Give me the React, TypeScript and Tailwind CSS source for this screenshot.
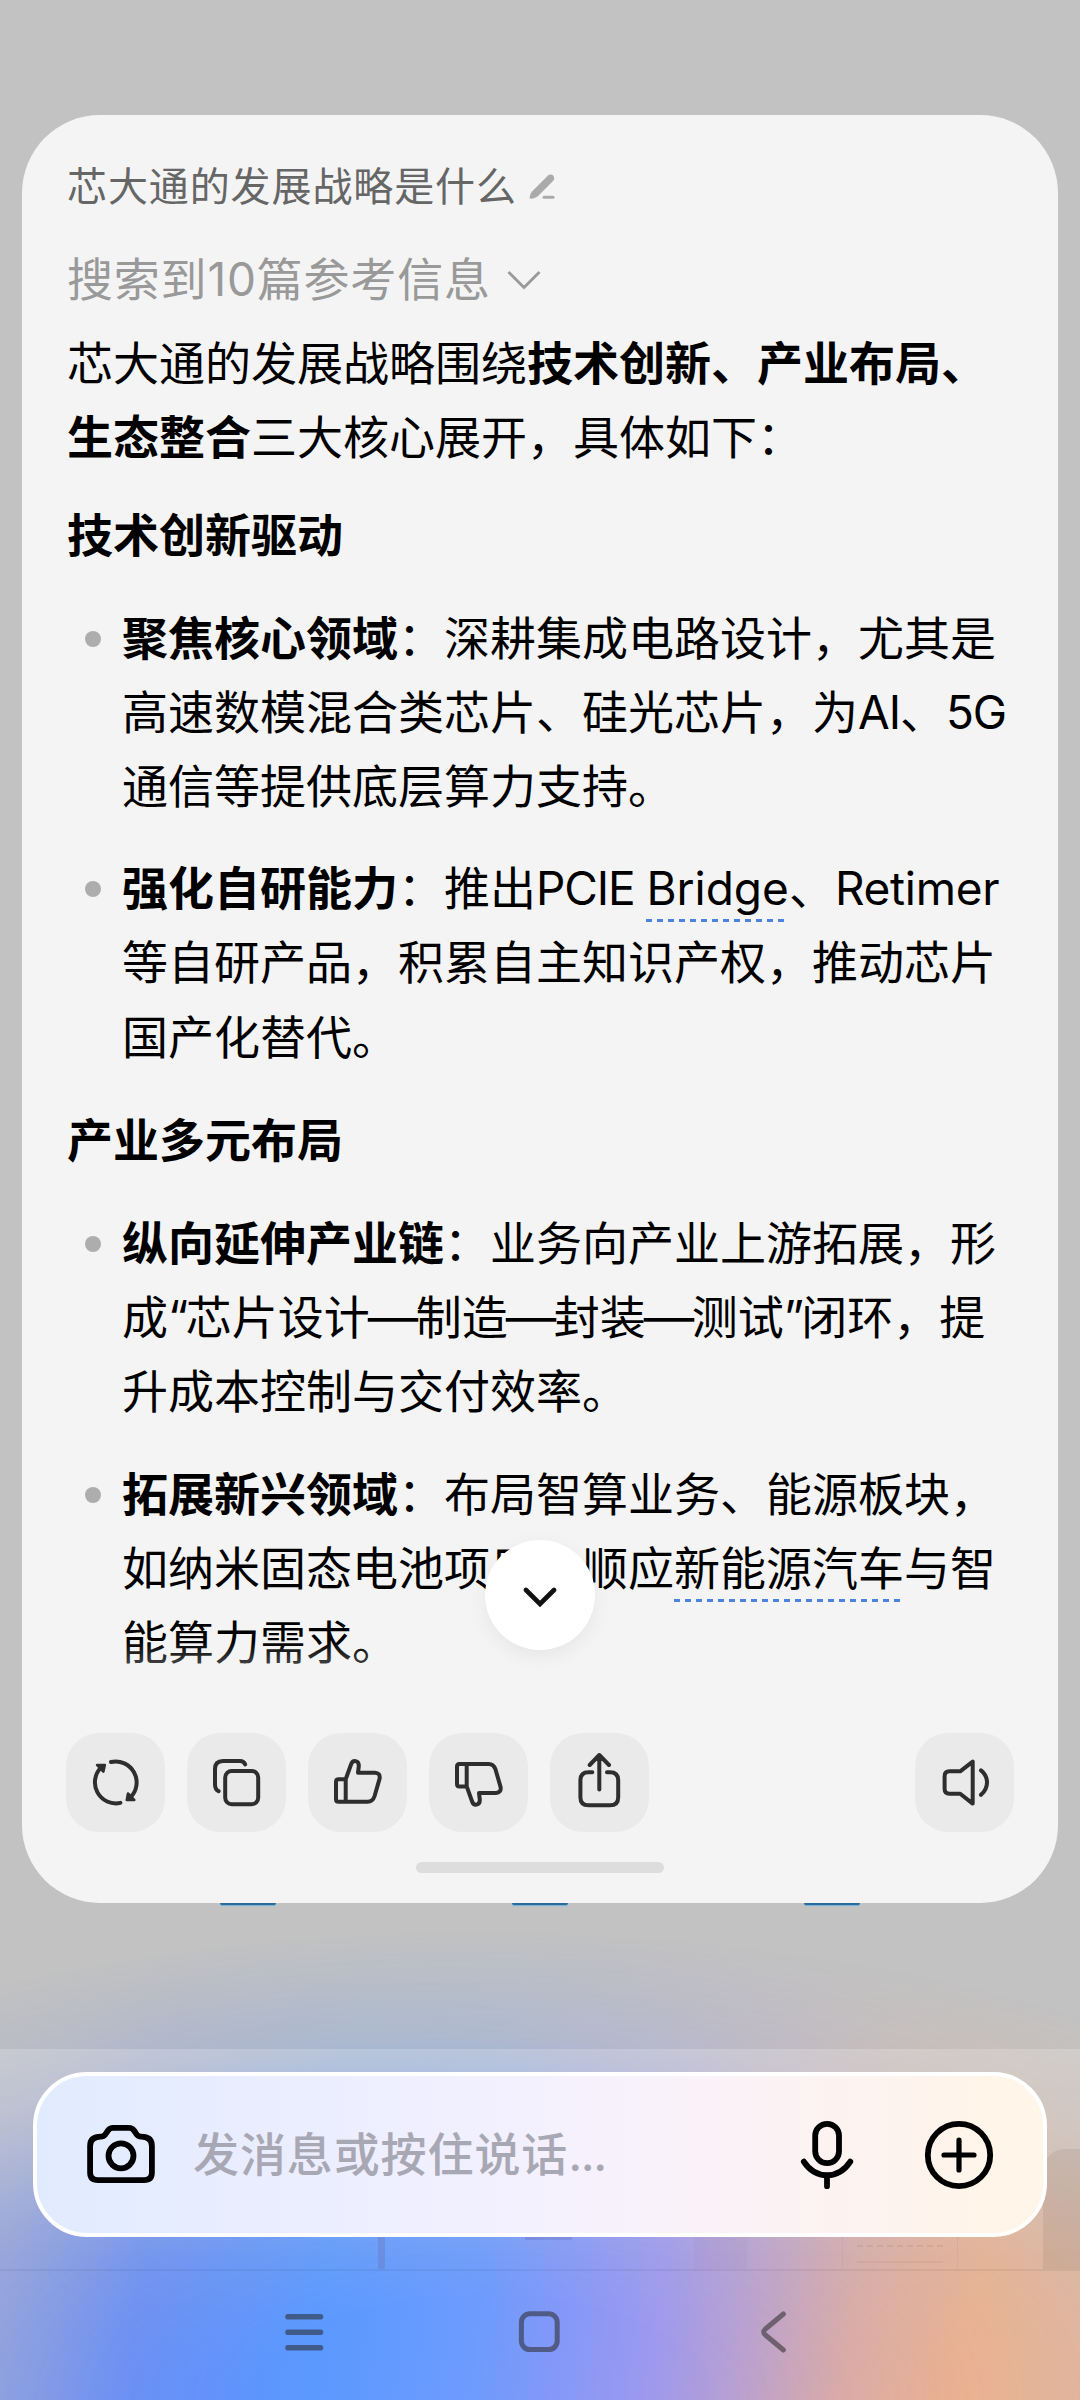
import type { ReactNode } from 'react'

const actions = ['refresh', 'copy', 'like', 'dislike', 'share'] as const

type IconName = (typeof actions)[number] | 'speaker'

const thumb =
  'M37.7 46.3H30.5Q28 46.3 28 48.8V66.2Q28 68.7 30.5 68.7H59.5Q64.8 68.7 66.6 63L71.6 45.6Q72.4 40 67 39.8H50L50.8 33C51 27 44.8 26.6 43.2 31L37.7 46.3V68.7'

const iconShapes: Record<IconName, ReactNode> = {
  refresh: (
    <>
      <path d="M45 29A21 21 0 0 1 64.2 64.6M54.4 69.9A21 21 0 0 1 35.2 34.4" />
      <path d="M62 60.5L68.2 67H60.8ZM31.2 32L38.8 32L37.4 38.6Z" fill="currentColor" strokeWidth="2.6" />
    </>
  ),
  copy: (
    <>
      <rect x="38.2" y="38" width="33" height="33.2" rx="6.5" />
      <path d="M58.2 31.4Q56.8 28 53 28H36Q28 28 28 36V51.5Q28 56.6 31.6 58.2" />
    </>
  ),
  like: <path d={thumb} />,
  dislike: <path d={thumb} transform="translate(0 99.7) scale(1 -1)" />,
  share: (
    <path d="M49.3 56.5V22M39.7 32L49.3 22L59 32M42.3 39.3H38.5Q30.4 39.3 30.4 47.4V64.2Q30.4 72.3 38.5 72.3H60Q68.2 72.3 68.2 64.2V47.4Q68.2 39.3 60 39.3H57" />
  ),
  speaker: (
    <path d="M57.7 28.6V70.6L45.2 60.7H34.5Q29.6 60.7 29.6 55.8V43.2Q29.6 38.3 34.5 38.3H45.2ZM66 37.4Q72 42.4 72 49.4T66 61.8" />
  ),
}

function ActionButton({ name }: { name: IconName }) {
  return (
    <button className="h-[99px] w-[99px] rounded-[33px] bg-black/[0.04] text-[#2e2e2e]">
      <svg
        viewBox="0 0 99 99"
        className="h-full w-full"
        fill="none"
        stroke="currentColor"
        strokeWidth="4"
        strokeLinecap="round"
        strokeLinejoin="round"
      >
        {iconShapes[name]}
      </svg>
    </button>
  )
}

function Term({ children }: { children: ReactNode }) {
  return (
    <span className="inline-block bg-[repeating-linear-gradient(90deg,#4c83dc_0_6px,transparent_6px_11px)] bg-[length:100%_3px] bg-[position:0_68px] bg-no-repeat align-top">
      {children}
    </span>
  )
}

const Dash = () => <span className="inline-block h-[74px] w-[46px] scale-x-110 text-center align-top">—</span>

const Latin = ({ children }: { children: ReactNode }) => <span className="tracking-[-1.1px]">{children}</span>

const Quote = ({ children }: { children: ReactNode }) => <span className="tracking-[-2.6px]">{children}</span>

function Item({ lines }: { lines: ReactNode[] }) {
  return (
    <li className="flex">
      <span className="mt-[30px] mr-[21px] ml-[18px] h-4 w-4 shrink-0 rounded-full bg-[#adadad]" />
      <div>
        {lines.map((line, i) => (
          <div key={i} className="h-[74.2px]">{line}</div>
        ))}
      </div>
    </li>
  )
}

function AnswerCard() {
  return (
    <section className="relative mx-[22px] mt-[115px] h-[1788px] shrink-0 rounded-[78px] bg-[#f4f4f4] px-[45px] whitespace-nowrap">
      <div className="flex items-center pt-[42px] text-[40px] leading-[60px] tracking-[0.9px] text-[#666]">
        芯大通的发展战略是什么
        <svg viewBox="0 0 26 26" className="ml-[12px] h-[26px] w-[26px]" fill="none" stroke="#aaa" strokeLinecap="round">
          <path d="M19 1.6Q22 -.6 24.4 1.8Q26.2 4.4 24 7L8.6 22.4Q4.6 25 1 24.8Q-.2 21.4 3 17.4Z" fill="#aaa" stroke="none" />
          <path d="M15 23.3H24" strokeWidth="3" />
        </svg>
      </div>

      <div className="mt-[27px] flex items-center text-[46px] leading-[70px] tracking-[0.8px] text-[#999]">
        搜索到10篇参考信息
        <svg viewBox="0 0 34 20" className="mt-[2px] ml-[16px] h-5 w-[34px]" fill="none" stroke="#999" strokeWidth="2.8">
          <path d="M1.5 2L17 17.5L32.5 2" />
        </svg>
      </div>

      <div className="mt-[12px] text-[46px] leading-[74.2px] text-black">
        <p>
          芯大通的发展战略围绕<b>技术创新、产业布局、</b>
          <br />
          <b>生态整合</b>三大核心展开，具体如下：
        </p>

        <h2 className="mt-[24px] font-bold">技术创新驱动</h2>
        <ul className="mt-[28px] space-y-[28px]">
          <Item
            lines={[
              <><b>聚焦核心领域</b>：深耕集成电路设计，尤其是</>,
              <>高速数模混合类芯片、硅光芯片，为<Latin>AI</Latin>、<Latin>5G</Latin></>,
              <>通信等提供底层算力支持。</>,
            ]}
          />
          <Item
            lines={[
              <><b>强化自研能力</b>：推出<Latin>PCIE </Latin><Term>Bridge</Term>、<span className="tracking-[-0.3px]">Retimer</span></>,
              <>等自研产品，积累自主知识产权，推动芯片</>,
              <>国产化替代。</>,
            ]}
          />
        </ul>

        <h2 className="mt-[29px] font-bold">产业多元布局</h2>
        <ul className="mt-[29px] space-y-[28px]">
          <Item
            lines={[
              <><b>纵向延伸产业链</b>：业务向产业上游拓展，形</>,
              <>成<Quote>“</Quote>芯片设计<Dash />制造<Dash />封装<Dash />测试<Quote>”</Quote>闭环，提</>,
              <>升成本控制与交付效率。</>,
            ]}
          />
          <Item
            lines={[
              <><b>拓展新兴领域</b>：布局智算业务、能源板块，</>,
              <>如纳米固态电池项目，顺应<Term>新能源汽车</Term>与智</>,
              <>能算力需求。</>,
            ]}
          />
        </ul>
      </div>

      {/* fade at the end of the scroll area */}
      <div className="absolute inset-x-[30px] top-[1526px] h-[70px] bg-linear-to-b from-transparent to-[#f4f4f4]/80" />

      <button className="absolute top-[1425px] left-[463px] flex h-[110px] w-[110px] items-center justify-center rounded-full bg-white shadow-[0_6px_20px_rgba(0,0,0,0.06)]">
        <svg viewBox="0 0 34 20" className="mt-[3px] h-5 w-[34px]" fill="none" stroke="#111" strokeWidth="4.6" strokeLinecap="round">
          <path d="M3 3L17 17L31 3" />
        </svg>
      </button>

      <div className="absolute inset-x-[44px] top-[1618px] flex justify-between">
        <div className="flex gap-[22px]">
          {actions.map((name) => (
            <ActionButton key={name} name={name} />
          ))}
        </div>
        <ActionButton name="speaker" />
      </div>

      <div className="absolute top-[1747px] left-[394px] h-[11px] w-[248px] rounded-full bg-[#ddd]" />
    </section>
  )
}

function InputBar() {
  return (
    <div className="relative mx-[33px] mt-[23px] flex h-[165px] shrink-0 items-center rounded-[54px] border-4 border-white bg-[linear-gradient(90deg,#e1ebff,#f2f0ff_45%,#f8f2fb_60%,#fdf3f0_82%,#fff5e8_96%)] pr-[49px] pl-[49px] text-black">
      <svg viewBox="0 0 70 60" className="-mt-[2px] h-[60px] w-[70px]" fill="none" stroke="currentColor" strokeWidth="5.8" strokeLinejoin="round">
        <path d="M27 3.9H43Q46 3.9 48 6.5L51 10.8Q52.4 12.6 55 12.6Q65.9 12.6 65.9 22V48.5Q65.9 56.1 58 56.1H12Q4.1 56.1 4.1 48.5V22Q4.1 12.6 15 12.6Q17.6 12.6 19 10.8L22 6.5Q24 3.9 27 3.9Z" />
        <circle cx="35" cy="31.8" r="12.5" />
      </svg>
      <span className="ml-[37px] flex-1 text-[46px] font-medium tracking-[0.9px] text-[#a8a8b4]">
        发消息或按住说话<span className="tracking-[-1.4px]">...</span>
      </span>
      <svg viewBox="0 0 54 70" className="h-[70px] w-[54px]" fill="none" stroke="currentColor" strokeWidth="5.8" strokeLinecap="round">
        <rect x="15.2" y="3.8" width="23.8" height="39.4" rx="11.9" />
        <path d="M3.8 41.6Q12.6 55.2 27 55.2T50.3 41.6M27 56V66.2" />
      </svg>
      <svg viewBox="0 0 70 70" className="ml-[70px] h-[70px] w-[70px]" fill="none" stroke="currentColor" strokeWidth="5.8" strokeLinecap="round">
        <circle cx="35" cy="35" r="31.2" />
        <path d="M35 20V50M20 35H50" strokeWidth="5.2" />
      </svg>
    </div>
  )
}

// dimmed remains of the page behind, visible between the input and the nav bar
function PageRemains() {
  return (
    <div className="flex h-8 shrink-0 items-start">
      <div className="ml-[378px] h-full w-[7px] bg-[#6a5f9c]/25" />
      <div className="ml-[140px] h-[3px] w-[47px] bg-[#4f4a90]/20" />
      <div className="ml-[122px] h-full w-[53px] bg-[#8a5a90]/5" />
      <div className="ml-[95px] h-full w-[116px] border-x border-[#a06850]/10 px-[14px]">
        <div className="mt-2 h-[18px] border-t-2 border-b-2 border-t-[#a06850]/15 border-b-[#a06850]/10 [border-top-style:dashed]" />
      </div>
    </div>
  )
}

function NavBar() {
  return (
    <nav className="h-[131px] shrink-0 border-t-2 border-black/5">
      <svg viewBox="0 0 1080 129" className="h-[129px] w-[1080px] opacity-55" fill="none" stroke="#2a2a2a" strokeWidth="5" strokeLinecap="round" strokeLinejoin="round">
        <path d="M288 45.7H320.5M288 61.3H320.5M288 76.7H320.5" strokeWidth="5.6" />
        <rect x="521.4" y="42.8" width="35.8" height="35.8" rx="8.5" />
        <path d="M783.4 43L765.4 58Q762 61 765.4 64L783.4 79" />
      </svg>
    </nav>
  )
}

export default function App() {
  return (
    <main className="relative isolate flex h-[2400px] w-[1080px] flex-col overflow-hidden bg-[#c2c2c2] font-['Inter','Noto_Sans_CJK_SC',sans-serif]">
      {/* coloured glow behind the input area */}
      <div className="absolute inset-x-0 bottom-0 -z-10 h-[470px] bg-[linear-gradient(97deg,#8297e6_4%,#628af9_16%,#5b99ff_32%,#6c9bfd_46%,#8598f8_54%,#9d99ee_62%,#b99fd0_70%,#dca8a4_79%,#f7ac80_90%,#f2ae88)] mask-[radial-gradient(ellipse_1050px_470px_at_480px_100%,black_22%,rgba(0,0,0,0.86)_38%,rgba(0,0,0,0.62)_58%,rgba(0,0,0,0.22)_77%,transparent)]" />
      <div className="absolute inset-x-0 bottom-0 -z-10 h-[351px] bg-linear-to-b from-white/20 to-transparent to-60%" />
      <div className="absolute right-0 bottom-[131px] -z-10 h-[120px] w-[37px] rounded-tl-[22px] bg-[#5c4638]/10" />

      <AnswerCard />

      <div className="flex h-[3px] shrink-0 gap-[236px] pl-[220px]">
        {[0, 1, 2].map((i) => (
          <div key={i} className="h-[2px] w-[56px] rounded-b-sm bg-[#2b6b96] shadow-[0_1px_1px_#6fb4de]" />
        ))}
      </div>

      <div className="h-[143px] shrink-0" />
      <InputBar />
      <PageRemains />
      <NavBar />
    </main>
  )
}
